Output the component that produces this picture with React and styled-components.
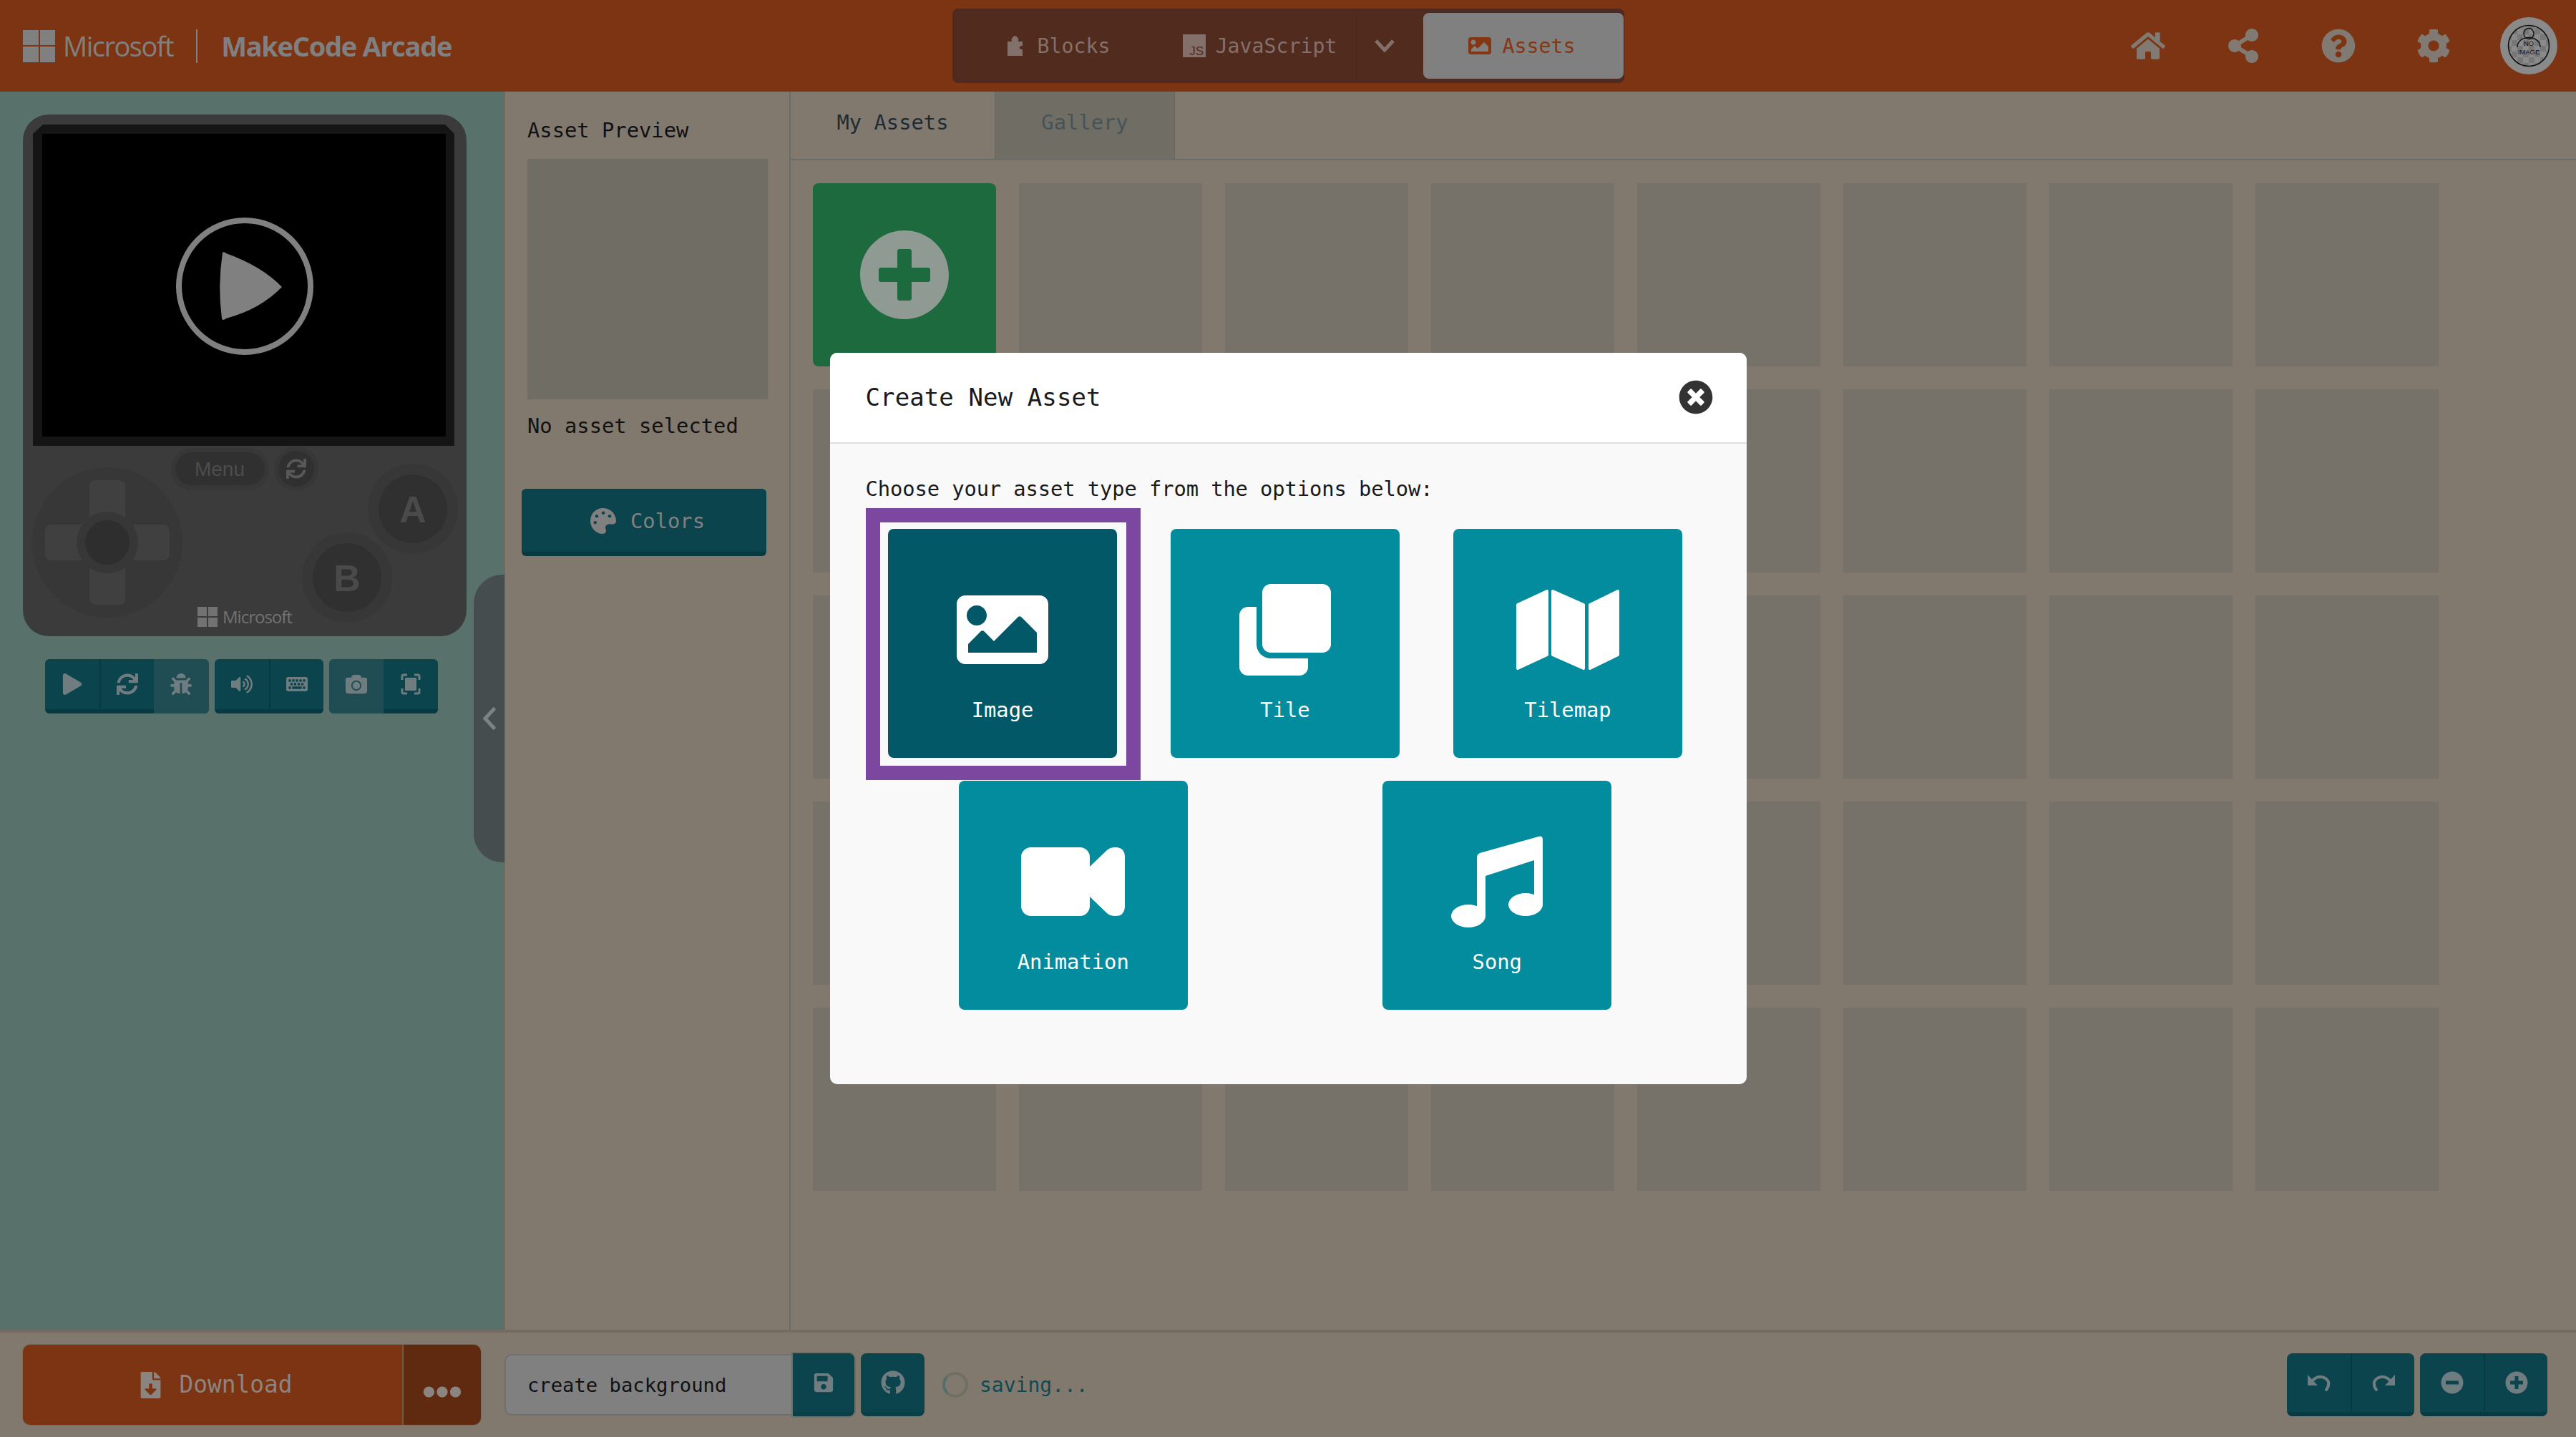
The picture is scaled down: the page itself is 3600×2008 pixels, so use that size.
import styled, {createGlobalStyle} from 'styled-components';
import {
    FaBug, FaCamera, FaClone, FaCog, FaEllipsisH, FaFileDownload, FaGithub, FaHome, FaImage, FaKeyboard,
    FaMinusCircle, FaPalette, FaPlay, FaPlusCircle, FaQuestionCircle, FaSave, FaShareAlt, FaSync,
    FaTimesCircle, FaVolumeUp,
} from 'react-icons/fa';

const MONO = '"DejaVu Sans Mono", "Liberation Mono", monospace';

const GlobalStyle = createGlobalStyle`
    html, body {
        margin: 0;
        padding: 0;
        background: #81796e;
    }

    * {
        box-sizing: border-box;
    }
`;

const Page = styled.div`
    position: relative;
    display: flex;
    flex-direction: column;
    width: 3600px;
    height: 2008px;
    overflow: hidden;
    font-family: ${MONO};
    background: #81796e;
`;

const Header = styled.header`
    display: grid;
    grid-template-columns: 1fr auto 1fr;
    align-items: center;
    height: 128px;
    flex: none;
    background: #7d3412;
`;

const Brand = styled.div`
    display: flex;
    align-items: center;
    padding-left: 32px;
    color: #808080;
    font-family: "Open Sans", sans-serif;
`;

const LogoGrid = styled.div`
    display: grid;
    grid-template-columns: repeat(2, ${p => p.$cell}px);
    grid-auto-rows: ${p => p.$cell}px;
    gap: 2px;

    i {
        background: ${p => p.$color};
    }
`;

const BrandName = styled.span`
    margin-left: 11px;
    font-size: 38px;
    letter-spacing: -1.5px;
`;

const BrandDivider = styled.span`
    width: 2px;
    height: 47px;
    margin: 0 33px 0 32px;
    background: #808080;
`;

const ProductName = styled.span`
    font-size: 38px;
    font-weight: 700;
    letter-spacing: -1.3px;
`;

const EditorToggle = styled.div`
    display: flex;
    height: 104px;
    padding: 6px 1px 6px 6px;
    border-radius: 8px;
    background: #4e2a20;
`;

const ToggleItem = styled.div`
    display: flex;
    align-items: center;
    justify-content: center;
    gap: ${p => p.$gap ?? 14}px;
    width: ${p => p.$width}px;
    padding-right: ${p => p.$trim ?? 0}px;
    padding-left: ${p => p.$push ?? 0}px;
    font-size: 28.2px;
    color: ${p => (p.$active ? '#843713' : '#84706a')};
    background: ${p => (p.$active ? '#808080' : '#522b1f')};
    border-left: ${p => (p.$split ? '1px solid #4b271c' : 'none')};
    border-radius: ${p => (p.$active ? '8px' : '0')};
`;

const HeaderIcons = styled.div`
    display: flex;
    justify-content: flex-end;
    align-items: center;
    color: #817a73;
`;

const HeaderIcon = styled.div`
    display: flex;
    align-items: center;
    justify-content: center;
    width: 133px;
    font-size: 48px;
`;

const Main = styled.main`
    display: flex;
    flex: 1;
    min-height: 0;
`;

const SimPanel = styled.section`
    position: relative;
    display: flex;
    flex-direction: column;
    align-items: flex-start;
    width: 703px;
    flex: none;
    padding: 32px 0 0 32px;
    background: #58716b;
`;

const SimToolbar = styled.div`
    display: flex;
    gap: 8px;
    margin: 32px 0 0 31px;
`;

const ToolGroup = styled.div`
    display: flex;
    overflow: hidden;
    border-radius: ${p => p.$radius ?? '6px'};
`;

const ToolButton = styled.div`
    display: flex;
    align-items: center;
    justify-content: center;
    width: ${p => p.$width ?? 76.2}px;
    height: ${p => p.$height ?? 76}px;
    font-size: ${p => p.$size ?? 30}px;
    color: #6f7d80;
    background: ${p => (p.$muted ? '#1f4d53' : '#0b444d')};
    border-bottom: 6px solid ${p => (p.$muted ? '#1f4d53' : '#0a3a41')};
    border-left: ${p => (p.$split ? '2px solid #0a3a41' : 'none')};
`;

const CollapseHandle = styled.div`
    position: absolute;
    left: 662px;
    top: 675px;
    display: flex;
    align-items: center;
    width: 43px;
    height: 402px;
    padding-left: 12px;
    border-radius: 40px 0 0 40px;
    background: #454d4e;
`;

const PreviewPanel = styled.section`
    display: flex;
    flex-direction: column;
    width: 400px;
    flex: none;
    padding: 37px 0 0 31px;
    border-left: 3px solid #6f6a60;
    color: #111;
    font-size: 28.8px;
`;

const PreviewTitle = styled.div`
    line-height: 34px;
`;

const PreviewBox = styled.div`
    width: 336px;
    height: 336px;
    margin-top: 23px;
    background: #706d64;
`;

const PreviewNote = styled.div`
    margin-top: 20px;
    line-height: 34px;
`;

const ColorsButton = styled.div`
    display: flex;
    align-items: center;
    justify-content: center;
    gap: 20px;
    width: 342px;
    height: 94px;
    margin: 71px 0 0 -8px;
    padding-left: 10px;
    color: #808080;
    background: #0b444d;
    border: 1px solid #0a3f47;
    border-bottom: 6px solid #0a3a41;
    border-radius: 6px;
`;

const AssetsPanel = styled.section`
    flex: 1;
    border-left: 2px solid #6a6a68;
`;

const Tabs = styled.div`
    display: flex;
    height: 96px;
    border-bottom: 2px solid #6b6b68;
    font-size: 28.8px;
`;

const Tab = styled.div`
    display: flex;
    align-items: center;
    justify-content: center;
    width: ${p => p.$width}px;
    padding-bottom: 8px;
    color: ${p => (p.$active ? '#1d2b36' : '#46545a')};
    background: ${p => (p.$active ? 'transparent' : '#706d64')};
    border-left: ${p => (p.$active ? 'none' : '1px solid #67675f')};
    border-right: ${p => (p.$active ? 'none' : '1px solid #67675f')};
`;

const AssetGrid = styled.div`
    display: grid;
    grid-template-columns: repeat(8, 256px);
    grid-auto-rows: 256px;
    gap: 32px;
    padding: 32px 0 0 31px;
`;

const AssetCell = styled.div`
    background: #76726a;
`;

const NewAssetCell = styled.div`
    display: flex;
    align-items: center;
    justify-content: center;
    border-radius: 8px;
    font-size: 128px;
    color: #8f9a92;
    background: #1c6a3d;
`;

const Footer = styled.footer`
    display: flex;
    align-items: center;
    height: 150px;
    flex: none;
    padding: 0 40px 0 32px;
    border-top: 4px solid #736b61;
`;

const DownloadGroup = styled.div`
    display: flex;
    height: 112px;
    overflow: hidden;
    border-radius: 10px;
    box-shadow: 0 0 0 1px #736f60;
    color: #8a8580;
`;

const DownloadButton = styled.div`
    display: flex;
    align-items: center;
    justify-content: center;
    gap: 22px;
    width: 530px;
    padding-left: 6px;
    font-size: 32.8px;
    background: #7d3412;
`;

const MoreButton = styled.div`
    display: flex;
    align-items: flex-end;
    justify-content: center;
    width: 110px;
    padding-bottom: 19px;
    font-size: 54px;
    line-height: 1;
    border-left: 2px solid #6d5a40;
    background: #5f2a10;
`;

const NameInput = styled.div`
    display: flex;
    align-items: center;
    width: 403px;
    height: 86px;
    margin-left: 33px;
    padding-left: 30px;
    font-size: 27.2px;
    color: #111;
    background: #808080;
    border-top: 2px solid #6f6f6b;
    border-bottom: 2px solid #6f6f6b;
    border-left: 2px solid #6f6f6b;
    border-radius: 10px 0 0 10px;
`;

const SaveButton = styled.div`
    display: flex;
    align-items: center;
    justify-content: center;
    width: ${p => p.$width}px;
    height: 88px;
    margin-left: ${p => p.$gap ?? 0}px;
    font-size: ${p => p.$size}px;
    color: #6f7d80;
    background: #0b444d;
    border-bottom: 6px solid #0a3f47;
    border-radius: ${p => p.$radius};
    box-shadow: ${p => (p.$ring ? '0 0 0 2px #6f7063' : 'none')};
`;

const Spinner = styled.span`
    width: 36px;
    height: 36px;
    margin-left: 25px;
    border-radius: 50%;
    border: 4px solid #6f7063;
    border-left-color: #566d6d;
`;

const SavingLabel = styled.span`
    margin-left: 16px;
    font-size: 28px;
    color: #0f4a54;
`;

const FooterRight = styled.div`
    display: flex;
    gap: 8px;
    margin-left: auto;
`;

const ModalLayer = styled.div`
    position: absolute;
    inset: 0;
    display: flex;
    align-items: center;
    justify-content: center;
`;

const Modal = styled.div`
    position: relative;
    z-index: 0;
    width: 1281px;
    height: 1022px;
    overflow: hidden;
    border-radius: 10px;
    background: #f9f9f9;
`;

const ModalHeader = styled.div`
    display: flex;
    align-items: center;
    justify-content: space-between;
    height: 127px;
    padding: 0 47px 2px 50px;
    background: #fff;
    border-bottom: 2px solid #e0e0e0;
`;

const ModalTitle = styled.h2`
    margin: 0;
    font-size: 34px;
    font-weight: 400;
    letter-spacing: 0.1px;
    color: #1a1a1a;
`;

const CloseIcon = styled.div`
    display: flex;
    font-size: 48px;
    color: #333;
`;

const ModalBody = styled.div`
    padding: 46px 0 0 50px;
`;

const Instructions = styled.p`
    margin: 0 0 39px;
    font-size: 28.8px;
    line-height: 34px;
    letter-spacing: -0.1px;
    color: #1a1a1a;
`;

const TypeRow = styled.div`
    display: flex;
    justify-content: space-around;
    width: 1185px;
    margin-left: -6px;
    margin-top: ${p => p.$top ?? 0}px;
`;

const TypeCard = styled.div`
    position: relative;
    display: flex;
    flex-direction: column;
    align-items: center;
    width: 320px;
    height: 320px;
    padding-top: 77px;
    border-radius: 8px;
    color: #fff;
    font-size: 28.8px;
    background: ${p => (p.$selected ? '#025866' : '#038b9e')};

    &::before {
        content: '';
        display: ${p => (p.$selected ? 'block' : 'none')};
        position: absolute;
        inset: -29px -33px -31px -31px;
        z-index: -1;
        border: 20px solid #7b479f;
        background: #f9f9f9;
    }
`;

const TypeIcon = styled.div`
    display: flex;
    align-items: center;
    justify-content: center;
    height: 128px;
    font-size: 128px;
`;

const TypeLabel = styled.span`
    margin-top: 30px;
    line-height: 36px;
`;

function MsLogo({cell, color}) {
    return (
            <LogoGrid $cell={cell} $color={color}>
                <i/><i/><i/><i/>
            </LogoGrid>
    );
}

function PuzzleIcon() {
    return (
            <svg width="21" height="28" viewBox="0 0 21 28" fill="#84706a">
                <path d="M0 8h6.500C5 6.500 5 2 10.500 0 16 2 16 6.500 14.500 8H21v6.500c-4.500-1.800-7 4.800 0 4.500V28H0z"/>
            </svg>
    );
}

function JsIcon() {
    return (
            <svg width="32" height="32" viewBox="0 0 32 32">
                <rect width="32" height="32" fill="#84706a"/>
                <text x="29" y="29" textAnchor="end" fontSize="17" fontFamily="Liberation Sans"
                      fill="#522b1f">JS</text>
            </svg>
    );
}

function FullscreenIcon() {
    return (
            <svg width="28" height="30" viewBox="0 0 28 30" fill="none" stroke="#6f7d80" strokeWidth="3">
                <path d="M2 9V4q0-2 2-2h5M19 2h5q2 0 2 2v5M26 21v5q0 2-2 2h-5M9 28H4q-2 0-2-2v-5"/>
                <rect x="6" y="6" width="16" height="18" fill="#6f7d80" stroke="none"/>
            </svg>
    );
}

// undo arrow, mirrored for redo
function HistoryIcon({flip}) {
    return (
            <svg width="32" height="26" viewBox="0 0 32 26" style={{transform: flip ? 'scaleX(-1)' : 'none'}}>
                <path d="M0 2v15h14z" fill="#6f7d80"/>
                <path d="M8 9A13 13 0 0 1 29 12Q30 18 26 23" fill="none" stroke="#6f7d80" strokeWidth="4" strokeLinecap="round"/>
            </svg>
    );
}

function MapIcon() {
    return (
            <svg width="144" height="112" viewBox="0 0 144 112" fill="#fff" stroke="#fff" strokeWidth="4" strokeLinejoin="round">
                <path d="M2 21 43 2V91L2 110z"/>
                <path d="M51 2 94 21V110L51 91z"/>
                <path d="M103 21 142 2V91L103 110z"/>
            </svg>
    );
}

function VideoIcon() {
    return (
            <svg width="145" height="96" viewBox="0 0 145 96" fill="#fff">
                <rect width="96" height="96" rx="14"/>
                <path d="M95 28 120 4Q124 0 132 0 145 0 145 14V82Q145 96 132 96 124 96 120 92L95 68z"/>
            </svg>
    );
}

function MusicIcon() {
    return (
            <svg width="128" height="128" viewBox="0 0 128 128" fill="#fff">
                <path d="M36 30Q36 26 40 24L122 1Q128-1 128 6V96H116V34L48 56V112H36z"/>
                <ellipse cx="104" cy="96" rx="24" ry="16"/>
                <ellipse cx="24" cy="112" rx="24" ry="16"/>
            </svg>
    );
}

function Avatar() {
    const checks = [];
    for (let y = 0; y < 8; y++) {
        for (let x = 0; x < 8; x++) {
            if ((x + y) % 2 === 0) {
                checks.push(<rect key={`${x}-${y}`} x={8 + x * 8} y={8 + y * 8} width="8" height="8" fill="#777"/>);
            }
        }
    }
    return (
            <svg width="80" height="80" viewBox="0 0 80 80">
                <circle cx="40" cy="40" r="40" fill="#8a8a8a"/>
                <clipPath id="avatar-clip"><circle cx="40" cy="40" r="28"/></clipPath>
                <g clipPath="url(#avatar-clip)">{checks}</g>
                <circle cx="40" cy="40" r="28.500" fill="none" stroke="#111" strokeWidth="1.600"/>
                <ellipse cx="40" cy="23" rx="7" ry="7.500" fill="none" stroke="#111" strokeWidth="1.400"/>
                <path d="M24 42c0-18 32-18 32 0" fill="none" stroke="#111" strokeWidth="1.400"/>
                <text x="40" y="40" textAnchor="middle" fontSize="9.500" fontFamily="Liberation Sans" fill="#111">NO</text>
                <text x="40" y="52" textAnchor="middle" fontSize="9.500" fontFamily="Liberation Sans" fill="#111">IMAGE</text>
            </svg>
    );
}

function Simulator() {
    return (
            <svg width="620" height="729" viewBox="0 0 620 729">
                <rect width="620" height="729" rx="36" fill="#3b3b3b"/>
                <path d="M14 27 28 14H590l13 13V463H14z" fill="#151515"/>
                <rect x="27" y="27" width="564" height="423" fill="#000"/>
                <circle cx="310" cy="240" r="92" fill="none" stroke="#808080" strokeWidth="8"/>
                <path d="M279 193Q281 191 284 194 334 212 362 241 332 272 284 285 279 289 278 285 272 240 279 193z"
                      fill="#808080"/>

                <rect x="207" y="466" width="137" height="59" rx="29" fill="#373737"/>
                <rect x="213" y="472" width="125" height="46" rx="23" fill="#303030"/>
                <text x="275" y="505" textAnchor="middle" fontSize="28" fontFamily="Liberation Sans" fill="#4d4d4d">Menu</text>
                <circle cx="382" cy="495" r="31" fill="#373737"/>
                <circle cx="382" cy="495" r="25" fill="#303030"/>
                <FaSync x="368" y="481" size="28" color="#585858"/>

                <circle cx="118" cy="598" r="105" fill="#373737"/>
                <rect x="31" y="573" width="174" height="50" rx="8" fill="#404040"/>
                <rect x="93" y="511" width="50" height="174" rx="8" fill="#404040"/>
                <circle cx="118" cy="598" r="43" fill="#373737"/>
                <circle cx="118" cy="598" r="31" fill="#2e2e2e"/>

                <circle cx="545" cy="551" r="63" fill="#373737"/>
                <circle cx="545" cy="551" r="48" fill="#303030"/>
                <text x="545" y="570" textAnchor="middle" fontSize="52" fontFamily="Liberation Sans" fontWeight="700" fill="#4a4a4a">A</text>
                <circle cx="453" cy="647" r="63" fill="#373737"/>
                <circle cx="453" cy="647" r="48" fill="#303030"/>
                <text x="453" y="666" textAnchor="middle" fontSize="52" fontFamily="Liberation Sans" fontWeight="700" fill="#4a4a4a">B</text>

                <path d="M244 688h13v13h-13zM259 688h13v13h-13zM244 703h13v13h-13zM259 703h13v13h-13z" fill="#727272"/>
                <text x="279" y="711" fontSize="24" fontFamily="Open Sans" letterSpacing="-1" fill="#727272">Microsoft</text>
            </svg>
    );
}

function App() {
    const topTypes = [
        {label: 'Image', icon: <FaImage/>, selected: true},
        {label: 'Tile', icon: <FaClone/>},
        {label: 'Tilemap', icon: <MapIcon/>},
    ];
    const bottomTypes = [
        {label: 'Animation', icon: <VideoIcon/>},
        {label: 'Song', icon: <MusicIcon/>},
    ];
    const card = t => (
            <TypeCard key={t.label} $selected={t.selected}>
                <TypeIcon>{t.icon}</TypeIcon>
                <TypeLabel>{t.label}</TypeLabel>
            </TypeCard>
    );

    return (
            <>
                <GlobalStyle/>
                <Page>
                    <Header>
                        <Brand>
                            <MsLogo cell={21.500} color="#808080"/>
                            <BrandName>Microsoft</BrandName>
                            <BrandDivider/>
                            <ProductName>MakeCode Arcade</ProductName>
                        </Brand>
                        <EditorToggle>
                            <ToggleItem $width={286} $gap={21}><PuzzleIcon/>Blocks</ToggleItem>
                            <ToggleItem $width={272} $gap={14} $push={4}><JsIcon/>JavaScript</ToggleItem>
                            <ToggleItem $width={94} $split $trim={14}>
                                <svg width="28" height="18" viewBox="0 0 28 18" fill="none" stroke="#84706a" strokeWidth="5">
                                    <path d="M2 2l12 13L26 2"/>
                                </svg>
                            </ToggleItem>
                            <ToggleItem $width={280} $active $gap={16} $trim={4}><FaImage size={32}/>Assets</ToggleItem>
                        </EditorToggle>
                        <HeaderIcons>
                            <HeaderIcon><FaHome/></HeaderIcon>
                            <HeaderIcon><FaShareAlt/></HeaderIcon>
                            <HeaderIcon><FaQuestionCircle/></HeaderIcon>
                            <HeaderIcon><FaCog/></HeaderIcon>
                            <HeaderIcon><Avatar/></HeaderIcon>
                        </HeaderIcons>
                    </Header>

                    <Main>
                        <SimPanel>
                            <Simulator/>
                            <SimToolbar>
                                <ToolGroup>
                                    <ToolButton><FaPlay/></ToolButton>
                                    <ToolButton $split><FaSync/></ToolButton>
                                    <ToolButton $muted><FaBug/></ToolButton>
                                </ToolGroup>
                                <ToolGroup>
                                    <ToolButton><FaVolumeUp/></ToolButton>
                                    <ToolButton $split><FaKeyboard/></ToolButton>
                                </ToolGroup>
                                <ToolGroup>
                                    <ToolButton $muted><FaCamera/></ToolButton>
                                    <ToolButton><FullscreenIcon/></ToolButton>
                                </ToolGroup>
                            </SimToolbar>
                            <CollapseHandle>
                                <svg width="20" height="32" viewBox="0 0 20 32" fill="none" stroke="#7a8486" strokeWidth="5" strokeLinecap="round">
                                    <path d="M16 3 4 16l12 13"/>
                                </svg>
                            </CollapseHandle>
                        </SimPanel>

                        <PreviewPanel>
                            <PreviewTitle>Asset Preview</PreviewTitle>
                            <PreviewBox/>
                            <PreviewNote>No asset selected</PreviewNote>
                            <ColorsButton><FaPalette size={36}/>Colors</ColorsButton>
                        </PreviewPanel>

                        <AssetsPanel>
                            <Tabs>
                                <Tab $width={285} $active>My Assets</Tab>
                                <Tab $width={252}>Gallery</Tab>
                            </Tabs>
                            <AssetGrid>
                                <NewAssetCell><FaPlusCircle/></NewAssetCell>
                                {Array.from({length: 39}, (_, i) => <AssetCell key={i}/>)}
                            </AssetGrid>
                        </AssetsPanel>
                    </Main>

                    <Footer>
                        <DownloadGroup>
                            <DownloadButton><FaFileDownload size={37}/>Download</DownloadButton>
                            <MoreButton><FaEllipsisH/></MoreButton>
                        </DownloadGroup>
                        <NameInput>create background</NameInput>
                        <SaveButton $width={86} $size={30} $radius="0 8px 8px 0" $ring><FaSave/></SaveButton>
                        <SaveButton $width={89} $size={34} $radius="8px" $gap={9}><FaGithub/></SaveButton>
                        <Spinner/>
                        <SavingLabel>saving...</SavingLabel>
                        <FooterRight>
                            <ToolGroup $radius="8px">
                                <ToolButton $width={89} $height={88}><HistoryIcon/></ToolButton>
                                <ToolButton $width={89} $height={88} $split><HistoryIcon flip/></ToolButton>
                            </ToolGroup>
                            <ToolGroup $radius="8px">
                                <ToolButton $width={89} $height={88} $size={32}><FaMinusCircle/></ToolButton>
                                <ToolButton $width={89} $height={88} $size={32} $split><FaPlusCircle/></ToolButton>
                            </ToolGroup>
                        </FooterRight>
                    </Footer>

                    <ModalLayer>
                        <Modal>
                            <ModalHeader>
                                <ModalTitle>Create New Asset</ModalTitle>
                                <CloseIcon><FaTimesCircle/></CloseIcon>
                            </ModalHeader>
                            <ModalBody>
                                <Instructions>Choose your asset type from the options below:</Instructions>
                                <TypeRow>{topTypes.map(card)}</TypeRow>
                                <TypeRow $top={32}>{bottomTypes.map(card)}</TypeRow>
                            </ModalBody>
                        </Modal>
                    </ModalLayer>
                </Page>
            </>
    );
}

export default App;
